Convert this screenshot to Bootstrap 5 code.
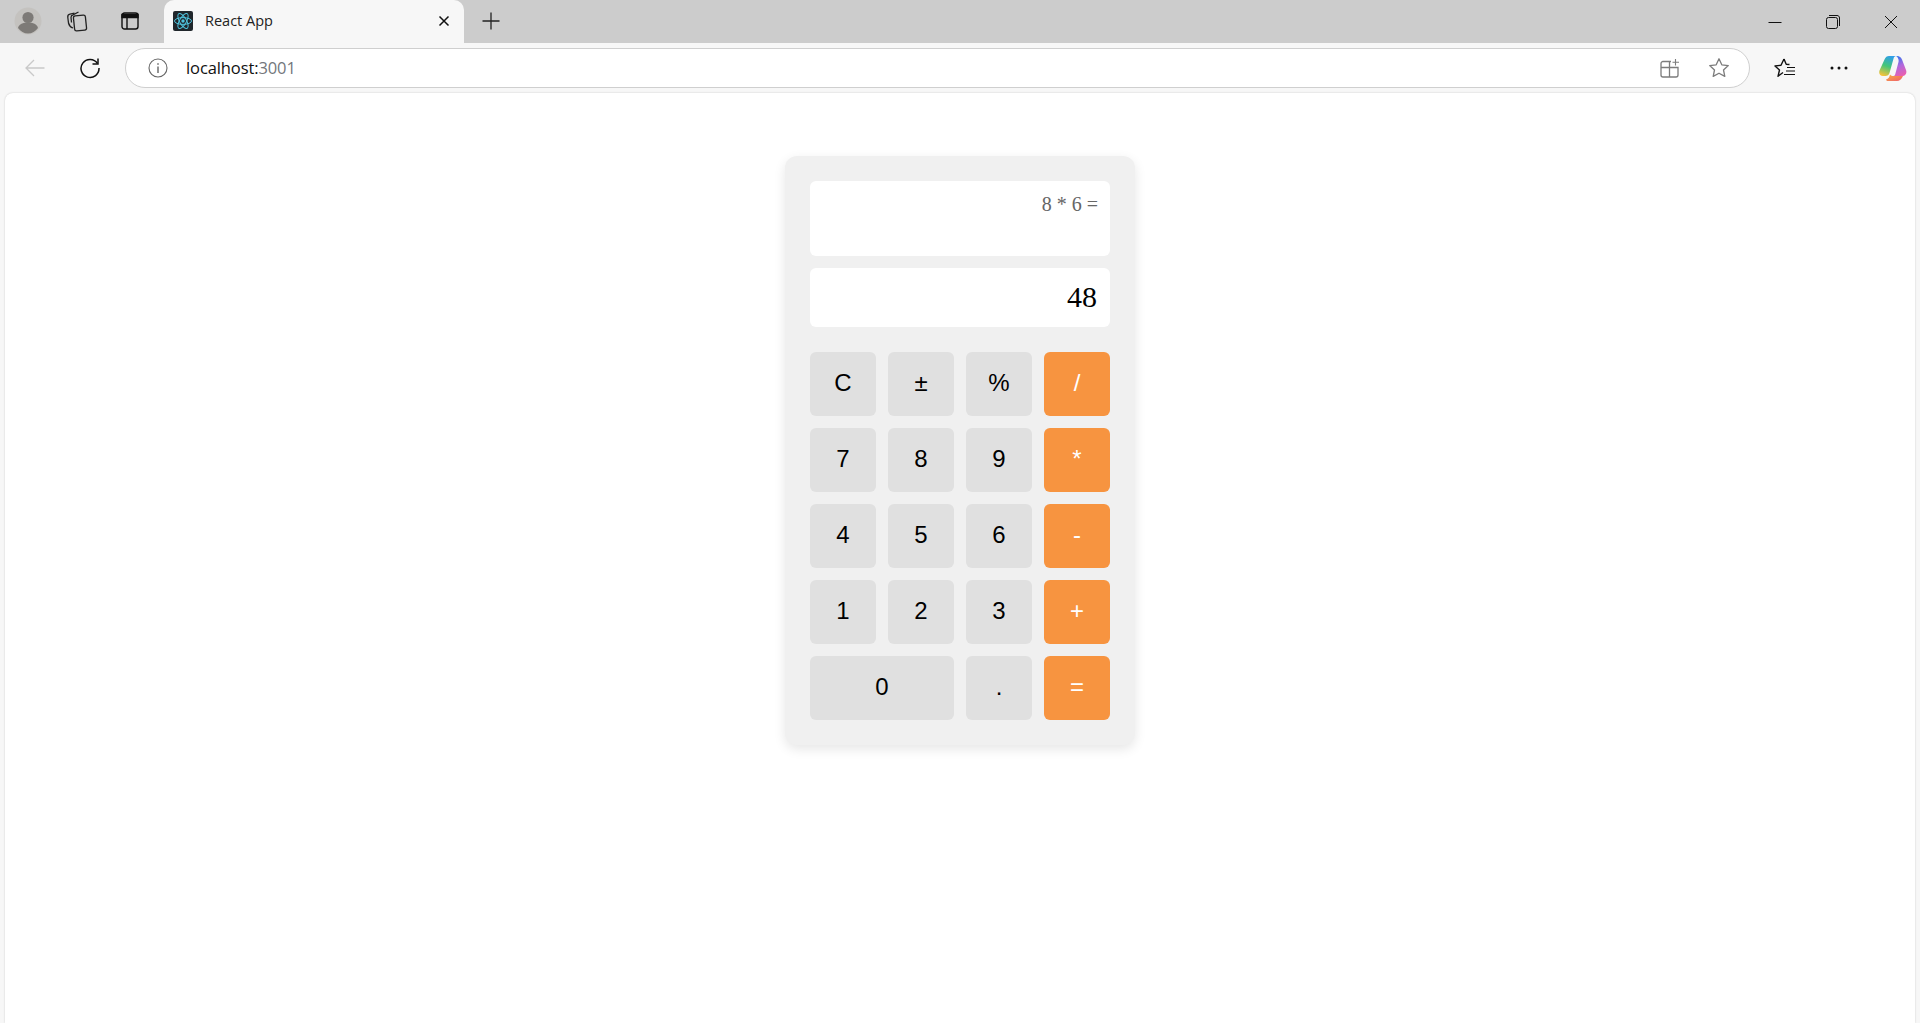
<!DOCTYPE html>
<html lang="en">
<head>
    <meta charset="UTF-8">
    <meta name="viewport" content="width=device-width, initial-scale=1.0">
    <title>React App</title>
    <link href="https://cdn.jsdelivr.net/npm/bootstrap@5.3.0/dist/css/bootstrap.min.css" rel="stylesheet">
    <style>
        html, body { height: 100%; }
        body {
            background-color: #f7f7f7;
            overflow: hidden;
            font-family: "Liberation Sans", Arial, sans-serif;
        }
        .tab-strip {
            height: 43px;
            background-color: #cccccc;
            padding-left: 10px;
        }
        .strip-icon { width: 38px; height: 34px; flex: none; margin-bottom: 2px; }
        .profile-slot { width: 36px; margin-bottom: 2px; }
        .collections-slot { margin-left: 12px; }
        .panel-slot { margin-left: 15px; }
        .browser-tab {
            width: 300px;
            height: 43px;
            margin-left: 15px;
            padding: 0 14px 2px 9px;
            background-color: #f7f7f7;
            border-radius: 10px 10px 0 0;
            font-family: "Open Sans", sans-serif;
            font-size: 14.5px;
            color: #222;
            flex: none;
        }
        .tab-title { margin-left: 12px; }
        .new-tab { margin-left: 8px; }
        .window-btn { width: 58px; height: 43px; }
        .tool-bar {
            height: 50px;
            padding-left: 15px;
        }
        .tool-slot { width: 40px; height: 40px; flex: none; }
        .reload-slot { margin-left: 15px; }
        .address-bar {
            width: 1625px;
            height: 40px;
            margin-left: 15px;
            padding: 0 19px 0 22px;
            background-color: #fff;
            border: 1px solid #cfcfcf;
            border-radius: 20px;
            font-family: "Open Sans", sans-serif;
            font-size: 16.5px;
            flex: none;
        }
        .url-host { margin-left: 18px; color: #111; letter-spacing: -0.1px; }
        .url-port { color: #73777c; }
        .star-icon { margin-left: 28px; }
        .right-tools { margin-left: 8px; }
        .right-tools .tool-slot { width: 54px; }
        .page-area {
            height: 930px;
            margin: 0 5px;
            background-color: #fff;
            border-radius: 8px 8px 0 0;
            box-shadow: 0 0 2px rgba(0, 0, 0, 0.2);
            padding-top: 63px;
        }
        .calc-panel {
            width: 350px;
            padding: 25px;
            background-color: #f0f0f0;
            border-radius: 12px;
            box-shadow: 0 4px 12px rgba(0, 0, 0, 0.1);
        }
        .history-box, .result-box {
            background-color: #fff;
            border-radius: 6px;
            text-align: right;
            font-family: "Liberation Serif", "Times New Roman", serif;
        }
        .history-box {
            height: 75px;
            padding: 12px 12px;
            font-size: 20px;
            line-height: 23px;
            color: #666;
        }
        .result-box {
            height: 59px;
            margin-top: 12px;
            margin-bottom: 25px;
            padding: 11px 13px;
            font-size: 30px;
            line-height: 35px;
            color: #000;
        }
        .key-grid {
            display: grid;
            grid-template-columns: repeat(4, 66px);
            grid-auto-rows: 64px;
            gap: 12px;
        }
        .calc-key {
            padding: 0 0 2px;
            border: 0;
            border-radius: 6px;
            background-color: #e0e0e0;
            color: #000;
            font-family: "Liberation Sans", Arial, sans-serif;
            font-size: 24px;
        }
        .calc-key.key-op { background-color: #f79440; color: #fff; }
        .calc-key.key-wide { grid-column: span 2; }
    </style>
</head>
<body>
    <div class="tab-strip d-flex align-items-center">
        <div class="profile-slot d-flex align-items-center justify-content-center">
            <svg width="28" height="28" viewBox="0 0 28 28"><circle cx="14" cy="14" r="13.5" fill="#c4c2bf"/><circle cx="14" cy="10.5" r="5.6" fill="#7d7a77"/><path d="M4 21c1-4 5-5.500 10-5.500s9 1.500 10 5.500c-2.500 3.500-6 5.500-10 5.500s-7.500-2-10-5.500z" fill="#7d7a77"/></svg>
        </div>
        <div class="strip-icon collections-slot d-flex align-items-center justify-content-center">
            <svg width="22" height="22" viewBox="0 0 22 22" fill="none" stroke="#222" stroke-width="1.300"><rect x="8" y="5.500" width="12" height="15" rx="2" transform="rotate(-6 14 13)"/><path d="M7 18C4 17 3 15 2.500 13L1.800 7.500C1.500 5.500 2.500 4.500 4 4.200L8.500 3.200"/><path d="M5.500 12.500L5 7.500C5 6 6 5 7 4.800L12.500 2"/></svg>
        </div>
        <div class="strip-icon panel-slot d-flex align-items-center justify-content-center">
            <svg width="18" height="18" viewBox="0 0 18 18" fill="none" stroke="#111" stroke-width="1.400"><rect x="1" y="1" width="16" height="16" rx="2.500"/><path d="M1 2.500h16V5.500H1z" fill="#111"/><path d="M6 5.500V17"/></svg>
        </div>
        <div class="browser-tab d-flex align-items-center">
            <svg width="20" height="20" viewBox="0 0 20 20"><rect width="20" height="20" rx="2" fill="#20262b"/><g fill="none" stroke="#4fc3dd" stroke-width="1"><ellipse cx="10" cy="10" rx="8.500" ry="3.400"/><ellipse cx="10" cy="10" rx="8.500" ry="3.400" transform="rotate(60 10 10)"/><ellipse cx="10" cy="10" rx="8.500" ry="3.400" transform="rotate(120 10 10)"/></g><circle cx="10" cy="10" r="1.700" fill="#4fc3dd"/></svg>
            <span class="tab-title">React App</span>
            <svg class="ms-auto" width="12" height="12" viewBox="0 0 12 12" stroke="#111" stroke-width="1.500"><path d="M1.500 1.500l9 9M10.500 1.500l-9 9"/></svg>
        </div>
        <div class="strip-icon new-tab d-flex align-items-center justify-content-center">
            <svg width="18" height="18" viewBox="0 0 18 18" stroke="#222" stroke-width="1.300"><path d="M9 .5v17M.5 9h17"/></svg>
        </div>
        <div class="ms-auto d-flex">
            <div class="window-btn d-flex align-items-center justify-content-center">
                <svg width="14" height="14" viewBox="0 0 14 14" stroke="#111" stroke-width="1"><path d="M.5 7.500h13"/></svg>
            </div>
            <div class="window-btn d-flex align-items-center justify-content-center">
                <svg width="14" height="14" viewBox="0 0 14 14" fill="none" stroke="#111" stroke-width="1"><rect x=".5" y="2.500" width="11" height="11" rx="2"/><path d="M3 .5h8c1.500 0 2.500 1 2.500 2.500v8"/></svg>
            </div>
            <div class="window-btn d-flex align-items-center justify-content-center">
                <svg width="14" height="14" viewBox="0 0 14 14" stroke="#111" stroke-width="1"><path d="M1 1l12 12M13 1L1 13"/></svg>
            </div>
        </div>
    </div>

    <div class="tool-bar d-flex align-items-center">
        <div class="tool-slot d-flex align-items-center justify-content-center">
            <svg width="20" height="20" viewBox="0 0 20 20" fill="none" stroke="#c9c9c9" stroke-width="1.300"><path d="M19.500 10H1M9 2l-8 8 8 8"/></svg>
        </div>
        <div class="tool-slot reload-slot d-flex align-items-center justify-content-center">
            <svg width="22" height="22" viewBox="0 0 22 22" fill="none" stroke="#111" stroke-width="1.500"><path d="M18.500 6.500A9 9 0 1 0 20 11"/><path d="M19 1.500v5.500h-5.500"/></svg>
        </div>
        <div class="address-bar d-flex align-items-center">
            <svg width="20" height="20" viewBox="0 0 20 20" fill="none" stroke="#666" stroke-width="1.100"><circle cx="10" cy="10" r="9"/><path d="M10 8.500V15" stroke-width="1.400"/><path d="M10 5.200v1.600" stroke-width="1.500"/></svg>
            <span class="url-host">localhost:<span class="url-port">3001</span></span>
            <svg class="ms-auto" width="20" height="20" viewBox="0 0 20 20" fill="none" stroke="#7c7c7c" stroke-width="1.300"><path d="M11 3.500H3a2 2 0 0 0-2 2V17a2 2 0 0 0 2 2h13a2 2 0 0 0 2-2V9.500H1M9.500 3.500V19"/><path d="M15.500 1v6.500M12.500 4.200h6.500" stroke-width="1.100"/></svg>
            <svg class="star-icon" width="22" height="22" viewBox="0 0 22 22" fill="none" stroke="#7c7c7c" stroke-width="1.300" stroke-linejoin="round"><path d="M11 1.800l2.800 6 6.500.8-4.800 4.400 1.300 6.400-5.800-3.200-5.800 3.200 1.300-6.400L1.700 8.600l6.500-.8z"/></svg>
        </div>
        <div class="right-tools d-flex">
            <div class="tool-slot d-flex align-items-center justify-content-center">
                <svg width="22" height="22" viewBox="0 0 22 22" fill="none" stroke="#111" stroke-width="1.400" stroke-linejoin="round"><path d="M10 2l2.200 5.200 3.300.3M9 15.500l-5 3.800 1.500-6.300L1 9l6-.7L10 2"/><path d="M13 10.500h8M12 14h9M10 17.500h11" stroke-width="1.200"/></svg>
            </div>
            <div class="tool-slot d-flex align-items-center justify-content-center">
                <svg width="18" height="4" viewBox="0 0 18 4" fill="#111"><circle cx="2" cy="2" r="1.500"/><circle cx="9" cy="2" r="1.500"/><circle cx="16" cy="2" r="1.500"/></svg>
            </div>
            <div class="tool-slot d-flex align-items-center justify-content-center">
                <svg width="28" height="28" viewBox="0 0 28 28">
                    <defs>
                        <linearGradient id="copilotLeft" x1="0.600" y1="0" x2="0.300" y2="1"><stop offset="0" stop-color="#2f9fe8"/><stop offset=".5" stop-color="#43c678"/><stop offset="1" stop-color="#f5c33b"/></linearGradient>
                        <linearGradient id="copilotRight" x1="0.300" y1="0" x2="0.600" y2="1"><stop offset="0" stop-color="#2f74ee"/><stop offset=".5" stop-color="#b069dd"/><stop offset="1" stop-color="#e85fb0"/></linearGradient>
                        <linearGradient id="copilotBottom" x1="0" y1="0" x2="1" y2="1"><stop offset="0" stop-color="#f9b43a"/><stop offset="1" stop-color="#ef5a6f"/></linearGradient>
                    </defs>
                    <path d="M10 2h7c-1.200.2-2 1-2.300 2L10.500 19c-.5 2-2 3-4 3H4c-3 0-4.500-2.500-3.500-5.500L5.500 5.500C6.500 3 8 2 10 2z" fill="url(#copilotLeft)"/>
                    <path d="M17 2h1c2.500 0 4 1.500 5 3.500l4 10.500c1.200 3-.5 6-3.500 6H14.500c1 0 1.500-.8 1.800-2L19.500 8c.5-2.500-.5-5-2.500-6z" fill="url(#copilotRight)"/>
                    <path d="M9 27h9c2.500 0 4.500-1.500 6-5h-9.500c-1.500 0-2.500-.3-3.500-1.500C10.500 23 9.500 25 7 25.500c.5 1 1 1.500 2 1.500z" fill="url(#copilotBottom)"/>
                </svg>
            </div>
        </div>
    </div>

    <div class="page-area">
        <div class="calc-panel mx-auto">
            <div class="history-box">8 * 6 =</div>
            <div class="result-box">48</div>
            <div class="key-grid">
                <button type="button" class="btn calc-key">C</button>
                <button type="button" class="btn calc-key">±</button>
                <button type="button" class="btn calc-key">%</button>
                <button type="button" class="btn calc-key key-op">/</button>
                <button type="button" class="btn calc-key">7</button>
                <button type="button" class="btn calc-key">8</button>
                <button type="button" class="btn calc-key">9</button>
                <button type="button" class="btn calc-key key-op">*</button>
                <button type="button" class="btn calc-key">4</button>
                <button type="button" class="btn calc-key">5</button>
                <button type="button" class="btn calc-key">6</button>
                <button type="button" class="btn calc-key key-op">-</button>
                <button type="button" class="btn calc-key">1</button>
                <button type="button" class="btn calc-key">2</button>
                <button type="button" class="btn calc-key">3</button>
                <button type="button" class="btn calc-key key-op">+</button>
                <button type="button" class="btn calc-key key-wide">0</button>
                <button type="button" class="btn calc-key">.</button>
                <button type="button" class="btn calc-key key-op">=</button>
            </div>
        </div>
    </div>

    <script src="https://cdn.jsdelivr.net/npm/bootstrap@5.3.0/dist/js/bootstrap.bundle.min.js"></script>
</body>
</html>
